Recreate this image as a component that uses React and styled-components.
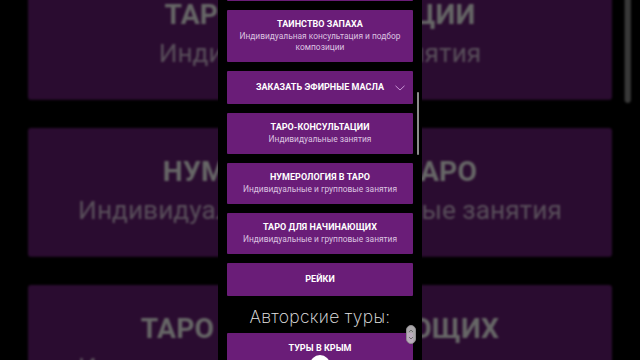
import React from "react";
import styled, { createGlobalStyle } from "styled-components";

const Global = createGlobalStyle`
  html, body { margin: 0; padding: 0; background: #000; }
  body { overflow: hidden; font-family: Roboto, "Noto Sans", Arial, sans-serif; }
`;

const Stage = styled.div`
  position: relative;
  width: 640px;
  height: 360px;
  overflow: hidden;
  background: #000;
  display: flex;
  justify-content: center;
`;

const Screen = styled.div`
  width: 204px;
  height: 360px;
  flex-shrink: 0;
  background: #000;
  display: flex;
  flex-direction: column;
  position: ${(p) => (p.$backdrop ? "absolute" : "relative")};
  left: ${(p) => (p.$backdrop ? "218px" : "auto")};
  top: 0;
  overflow: ${(p) => (p.$backdrop ? "visible" : "hidden")};
  transform: ${(p) => (p.$backdrop ? "scale(3.14)" : "none")};
  transform-origin: 102px 179.3px;
  filter: ${(p) => (p.$backdrop ? "blur(0.4px) brightness(0.4)" : "none")};
  pointer-events: ${(p) => (p.$backdrop ? "none" : "auto")};
`;

const Feed = styled.div`
  display: flex;
  flex-direction: column;
  flex-shrink: 0;
  gap: 9px;
  padding: 0 9px;
  margin-top: -40px;
  & > * { flex-shrink: 0; }
`;

const Card = styled.div`
  position: relative;
  background: #6a1d78;
  border-radius: 1px;
  min-height: ${(p) => (p.$short ? "33px" : "0")};
  box-sizing: border-box;
  padding: ${(p) => (p.$tight ? "10px 10px 4px" : "9px 10px")};
  display: flex;
  flex-direction: column;
  justify-content: ${(p) => (p.$tight ? "flex-start" : "center")};
  align-items: center;
  text-align: center;
`;

const Title = styled.div`
  color: #fff;
  font-weight: 700;
  font-size: 9px;
  line-height: 11px;
  letter-spacing: 0.05px;
  text-transform: uppercase;
`;

const Sub = styled.div`
  color: #dcc3e0;
  font-size: 8.4px;
  line-height: 11px;
  margin-top: 1px;
`;

const Chevron = styled.svg`
  position: absolute;
  right: 8px;
  top: 50%;
  margin-top: -3px;
`;

const Heading = styled.div`
  height: 37px;
  box-sizing: border-box;
  padding-top: 3px;
  display: flex;
  align-items: center;
  justify-content: center;
  color: #e6e6e6;
  font-family: Inter, Lato, "Noto Sans", sans-serif;
  font-weight: 200;
  font-size: 17.5px;
  letter-spacing: 0.3px;
  margin: -9px 0;
`;

const Dot = styled.div`
  width: 20px;
  height: 20px;
  border-radius: 50%;
  background: #fff;
  margin-top: 1px;
`;

const ScrollBar = styled.div`
  position: absolute;
  left: 199px;
  top: 92px;
  width: 2px;
  height: 63px;
  border-radius: 1px;
  background: #8c8c8c;
`;

const ScrollPill = styled.svg`
  position: absolute;
  left: 188px;
  top: 325px;
`;

const items = [
  { title: "Ароматерапия", sub: "Индивидуальные занятия" },
  { title: "Таинство запаха", sub: "Индивидуальная консультация и подбор композиции" },
  { title: "Заказать эфирные масла", chevron: true },
  { title: "Таро-консультации", sub: "Индивидуальные занятия" },
  { title: "Нумерология в таро", sub: "Индивидуальные и групповые занятия" },
  { title: "Таро для начинающих", sub: "Индивидуальные и групповые занятия" },
  { title: "Рейки" },
];

function Content({ backdrop }) {
  return (
    <Screen $backdrop={backdrop} aria-hidden={backdrop ? "true" : undefined}>
      <Feed>
        {items.map((it) => (
          <Card key={it.title} $short={!it.sub}>
            <Title>{it.title}</Title>
            {it.sub && <Sub>{it.sub}</Sub>}
            {it.chevron && (
              <Chevron width="10" height="6" viewBox="0 0 10 6">
                <polyline points="0.5,0.8 5,5 9.5,0.8" fill="none" stroke="#c795d3" strokeWidth="1" />
              </Chevron>
            )}
          </Card>
        ))}
        <Heading>Авторские туры:</Heading>
        <Card $tight>
          <Title>Туры в Крым</Title>
          <Dot />
        </Card>
      </Feed>
      <ScrollBar />
      {!backdrop && (
        <ScrollPill width="10" height="19" viewBox="0 0 10 19">
          <rect x="0.5" y="0.5" width="9" height="18" rx="4.5" fill="#c9c6c9" fillOpacity="0.85" stroke="#8e8b8e" strokeWidth="1" />
          <polyline points="3,7 5,5 7,7" fill="none" stroke="#666" strokeWidth="0.9" />
          <polyline points="3,12 5,14 7,12" fill="none" stroke="#666" strokeWidth="0.9" />
        </ScrollPill>
      )}
    </Screen>
  );
}

export default function App() {
  return (
    <Stage>
      <Global />
      <Content backdrop />
      <Content />
    </Stage>
  );
}
